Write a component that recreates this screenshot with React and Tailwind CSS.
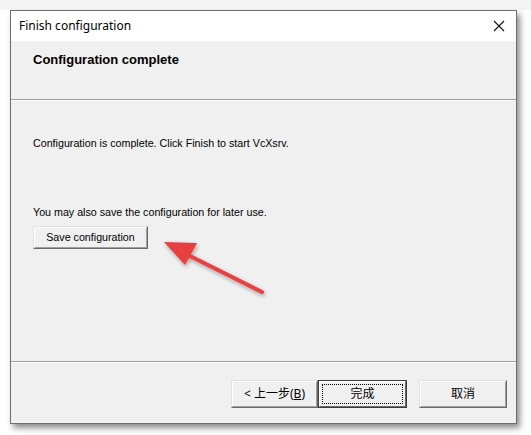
import React from 'react';

const ui = { fontFamily: '"Liberation Sans", "Noto Sans CJK SC", sans-serif' };
const cjk = { fontFamily: '"Noto Sans", "Noto Sans CJK SC", sans-serif' };

function Win95Button({ children, className = '', isDefault = false }) {
  if (isDefault) {
    return (
      <button className={`flex items-center justify-center bg-[#f0f0f0] border border-[#3c3c3c] ${className}`}>
        <span className="flex items-center justify-center w-full h-full border-t border-l border-t-white border-l-white border-b border-r border-b-[#696969] border-r-[#696969] p-[2px]">
          <span className="flex items-center justify-center w-full h-full border border-dotted border-black text-[12px] text-black" style={cjk}>
            {children}
          </span>
        </span>
      </button>
    );
  }
  return (
    <button className={`flex items-center justify-center bg-[#f0f0f0] border-t border-l border-t-[#e3e3e3] border-l-[#e3e3e3] border-b border-r border-b-[#696969] border-r-[#696969] ${className}`}>
      <span className="flex items-center justify-center w-full h-full border-t border-l border-t-white border-l-white border-b border-r border-b-[#a0a0a0] border-r-[#a0a0a0] text-[10.7px] text-black">
        {children}
      </span>
    </button>
  );
}

function Arrow() {
  return (
    <svg className="absolute left-[150px] top-[228px]" width="130" height="80" viewBox="0 0 130 80">
      <defs>
        <filter id="sh" x="-20%" y="-20%" width="140%" height="140%">
          <feGaussianBlur in="SourceAlpha" stdDeviation="2" />
          <feOffset dx="1" dy="2" />
          <feComponentTransfer><feFuncA type="linear" slope="0.35" /></feComponentTransfer>
          <feMerge><feMergeNode /><feMergeNode in="SourceGraphic" /></feMerge>
        </filter>
      </defs>
      <g filter="url(#sh)">
        <line x1="112" y1="64" x2="34" y2="25" stroke="#e8403f" strokeWidth="4" strokeLinecap="round" />
        <polygon points="14,14 47,15 35,37" fill="#e8403f" />
      </g>
    </svg>
  );
}

export default function App() {
  return (
    <div className="w-[531px] h-[435px] bg-white relative overflow-hidden" style={ui}>
      <div className="absolute left-0 top-0 w-[531px] h-[10px] bg-[#f4f4f4]" />
      <div className="ml-[10px] mt-[10px] w-[507px] h-[414px] border border-[#6e6e6e] flex flex-col bg-[#f0f0f0] shadow-[3px_4px_6px_rgba(0,0,0,0.45)] relative">
        {/* title bar */}
        <div className="h-[30px] bg-white flex items-center justify-between pl-[8px] pr-[6px] shrink-0">
          <span className="text-[12px] text-black" style={cjk}>Finish configuration</span>
          <svg width="12" height="12" viewBox="0 0 12 12" className="mr-[5px]">
            <path d="M1 1 L11 11 M11 1 L1 11" stroke="#111" strokeWidth="1.1" />
          </svg>
        </div>
        {/* header */}
        <div className="h-[58px] shrink-0 pl-[22px] pt-[11px] text-[13px] leading-[15px]">
          <span className="font-bold text-black">Configuration complete</span>
        </div>
        <div className="h-[1px] bg-[#a0a0a0] shrink-0" />
        <div className="h-[1px] bg-white shrink-0" />
        {/* body */}
        <div className="h-[260px] shrink-0 pl-[22px] flex flex-col">
          <p className="mt-[36px] text-[10.7px] text-black leading-[13px]">Configuration is complete. Click Finish to start VcXsrv.</p>
          <p className="mt-[56px] text-[10.7px] text-black leading-[13px]">You may also save the configuration for later use.</p>
          <Win95Button className="mt-[7px] w-[115px] h-[23px]">Save configuration</Win95Button>
        </div>
        <div className="h-[1px] bg-[#a0a0a0] shrink-0" />
        <div className="h-[1px] bg-white shrink-0" />
        {/* footer */}
        <div className="flex-1 flex items-start justify-end pr-[9px] pt-[17px]">
          <Win95Button className="w-[87px] h-[28px]">
            <span style={cjk} className="text-[12px]">&lt; 上一步(<span className="underline">B</span>)</span>
          </Win95Button>
          <Win95Button isDefault className="w-[89px] h-[28px]">完成</Win95Button>
          <Win95Button className="ml-[12px] w-[88px] h-[28px]">
            <span style={cjk} className="text-[12px]">取消</span>
          </Win95Button>
        </div>
      </div>
      <Arrow />
    </div>
  );
}
